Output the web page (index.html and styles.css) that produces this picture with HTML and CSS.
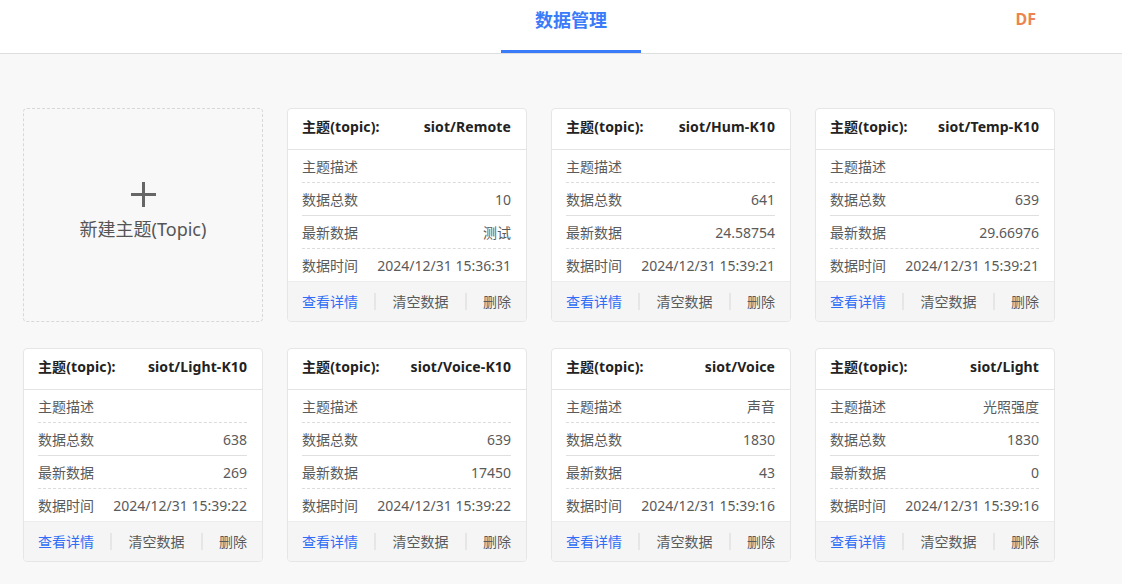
FILE: index.html
```html
<!DOCTYPE html>
<html lang="zh">
<head>
<meta charset="utf-8">
<link rel="stylesheet" href="styles.css">
</head>
<body>
<header class="topbar">
  <nav class="tabs"><a class="tab active">数据管理</a></nav>
  <div class="user">DF</div>
</header>
<main class="grid">
  <div class="new-card">
    <svg class="plus" width="25" height="25" viewBox="0 0 25 25"><path d="M12.5 0v25M0 12.5h25" stroke="#666" stroke-width="3"/></svg>
    <div class="new-label">新建主题(Topic)</div>
  </div>

  <div class="card">
    <div class="card-head"><span>主题(topic):</span><span>siot/Remote</span></div>
    <div class="row dashed"><span>主题描述</span><span></span></div>
    <div class="row solid"><span>数据总数</span><span>10</span></div>
    <div class="row dashed"><span>最新数据</span><span>测试</span></div>
    <div class="row"><span>数据时间</span><span>2024/12/31 15:36:31</span></div>
    <div class="card-foot"><a class="link">查看详情</a><i class="sep"></i><a>清空数据</a><i class="sep"></i><a>删除</a></div>
  </div>

  <div class="card">
    <div class="card-head"><span>主题(topic):</span><span>siot/Hum-K10</span></div>
    <div class="row dashed"><span>主题描述</span><span></span></div>
    <div class="row solid"><span>数据总数</span><span>641</span></div>
    <div class="row dashed"><span>最新数据</span><span>24.58754</span></div>
    <div class="row"><span>数据时间</span><span>2024/12/31 15:39:21</span></div>
    <div class="card-foot"><a class="link">查看详情</a><i class="sep"></i><a>清空数据</a><i class="sep"></i><a>删除</a></div>
  </div>

  <div class="card">
    <div class="card-head"><span>主题(topic):</span><span>siot/Temp-K10</span></div>
    <div class="row dashed"><span>主题描述</span><span></span></div>
    <div class="row solid"><span>数据总数</span><span>639</span></div>
    <div class="row dashed"><span>最新数据</span><span>29.66976</span></div>
    <div class="row"><span>数据时间</span><span>2024/12/31 15:39:21</span></div>
    <div class="card-foot"><a class="link">查看详情</a><i class="sep"></i><a>清空数据</a><i class="sep"></i><a>删除</a></div>
  </div>

  <div class="card">
    <div class="card-head"><span>主题(topic):</span><span>siot/Light-K10</span></div>
    <div class="row dashed"><span>主题描述</span><span></span></div>
    <div class="row solid"><span>数据总数</span><span>638</span></div>
    <div class="row dashed"><span>最新数据</span><span>269</span></div>
    <div class="row"><span>数据时间</span><span>2024/12/31 15:39:22</span></div>
    <div class="card-foot"><a class="link">查看详情</a><i class="sep"></i><a>清空数据</a><i class="sep"></i><a>删除</a></div>
  </div>

  <div class="card">
    <div class="card-head"><span>主题(topic):</span><span>siot/Voice-K10</span></div>
    <div class="row dashed"><span>主题描述</span><span></span></div>
    <div class="row solid"><span>数据总数</span><span>639</span></div>
    <div class="row dashed"><span>最新数据</span><span>17450</span></div>
    <div class="row"><span>数据时间</span><span>2024/12/31 15:39:22</span></div>
    <div class="card-foot"><a class="link">查看详情</a><i class="sep"></i><a>清空数据</a><i class="sep"></i><a>删除</a></div>
  </div>

  <div class="card">
    <div class="card-head"><span>主题(topic):</span><span>siot/Voice</span></div>
    <div class="row dashed"><span>主题描述</span><span>声音</span></div>
    <div class="row solid"><span>数据总数</span><span>1830</span></div>
    <div class="row dashed"><span>最新数据</span><span>43</span></div>
    <div class="row"><span>数据时间</span><span>2024/12/31 15:39:16</span></div>
    <div class="card-foot"><a class="link">查看详情</a><i class="sep"></i><a>清空数据</a><i class="sep"></i><a>删除</a></div>
  </div>

  <div class="card">
    <div class="card-head"><span>主题(topic):</span><span>siot/Light</span></div>
    <div class="row dashed"><span>主题描述</span><span>光照强度</span></div>
    <div class="row solid"><span>数据总数</span><span>1830</span></div>
    <div class="row dashed"><span>最新数据</span><span>0</span></div>
    <div class="row"><span>数据时间</span><span>2024/12/31 15:39:16</span></div>
    <div class="card-foot"><a class="link">查看详情</a><i class="sep"></i><a>清空数据</a><i class="sep"></i><a>删除</a></div>
  </div>
</main>
</body>
</html>
```
FILE: styles.css
```css
* { box-sizing: border-box; }
html, body { margin: 0; padding: 0; }
body {
  background: #f8f8f8;
  font-family: "Noto Sans", "Noto Sans CJK SC", sans-serif;
  font-size: 14px;
  color: #555;
  width: 1122px;
  height: 584px;
  overflow: hidden;
}
.topbar {
  height: 54px;
  background: #fff;
  border-bottom: 1px solid #dedede;
  display: flex;
  align-items: flex-start;
}
.tabs { padding-left: 501px; display: flex; }
.tab {
  width: 140px;
  height: 53px;
  text-align: center;
  line-height: 40px;
  font-size: 18px;
  font-weight: 700;
  color: #3a7bfa;
  border-bottom: 3px solid #3a7bfa;
}
.user {
  margin-left: auto;
  margin-right: 86px;
  line-height: 38px;
  font-size: 16px;
  font-weight: 700;
  color: #ec8450;
}
.grid {
  display: grid;
  grid-template-columns: repeat(4, 240px);
  grid-auto-rows: 214px;
  column-gap: 24px;
  row-gap: 26px;
  padding: 54px 0 0 23px;
}
.new-card {
  border: 1px dashed #d8d8d8;
  border-radius: 4px;
  display: flex;
  flex-direction: column;
  align-items: center;
  justify-content: center;
  padding-bottom: 8px;
}
.plus { display: block; margin-bottom: 10px; }
.new-label { font-size: 18px; color: #555; line-height: 24px; }
.card {
  background: #fff;
  border: 1px solid #e6e6e6;
  border-radius: 4px;
  display: flex;
  flex-direction: column;
  overflow: hidden;
}
.card-head {
  height: 41px;
  border-bottom: 1px solid #e4e4e4;
  display: flex;
  justify-content: space-between;
  align-items: center;
  padding: 0 15px 6px 14px;
  font-weight: 700;
  color: #222;
  letter-spacing: 0.1px;
}
.row {
  margin: 0 15px 0 14px;
  height: 32px;
  display: flex;
  justify-content: space-between;
  align-items: center;
  color: #5a5a5a;
}
.row.dashed { height: 33px; border-bottom: 1px dashed #dcdcdc; }
.row.solid { height: 33px; border-bottom: 1px solid #e0e0e0; }
.card-foot {
  height: 40px;
  background: #f5f5f5;
  border-top: 1px solid #ececec;
  display: flex;
  justify-content: space-between;
  align-items: center;
  padding: 0 15px 2px 14px;
  color: #5a5a5a;
}
.card-foot .link { color: #2f6df6; }
.sep {
  display: block;
  width: 2px;
  height: 17px;
  margin-top: 2px;
  background: #e6e6e6;
}
```
